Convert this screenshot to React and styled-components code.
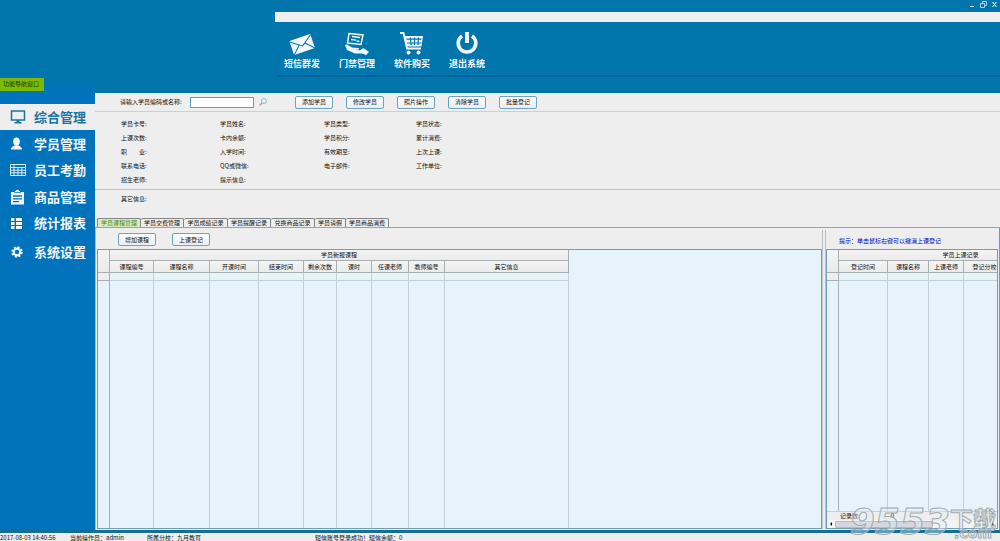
import React, { useState } from "react";
import styled, { createGlobalStyle } from "styled-components";

const GlobalStyle = createGlobalStyle`
    * {
        box-sizing: border-box;
    }

    html, body, #root {
        height: 100%;
        margin: 0;
    }

    body, button, input {
        font-family: "Noto Sans CJK SC", "Noto Sans", sans-serif;
        font-size: 6px;
        line-height: 8px;
        color: #111;
    }

    button {
        margin: 0;
        padding: 0;
        border: 0;
        background: none;
        white-space: nowrap;
        cursor: pointer;
    }
`;

const Page = styled.div`
    position: relative;
    display: flex;
    flex-direction: column;
    height: 100vh;
    overflow: hidden;
    background: #eeeeee;
`;

const Header = styled.header`
    flex: none;
    height: 78px;
    background: #0076ad;
`;

const WindowButtons = styled.div`
    display: flex;
    justify-content: flex-end;
    gap: 4px;
    height: 12px;
    padding: 1px 2px 0 0;

    button {
        width: 7px;
        height: 7px;
    }

    svg {
        display: block;
    }
`;

const MenuStrip = styled.div`
    height: 10px;
    margin-left: 275px;
    background: #eeefee;
`;

const MainMenu = styled.nav`
    display: flex;
    height: 55px;
    margin-left: 277px;
    padding-top: 9px;
    border-bottom: 2px solid #00649c;
`;

const MainMenuItem = styled.button`
    display: flex;
    flex-direction: column;
    align-items: center;
    width: 55px;
    padding-right: 5px;
    font-size: 9px;
    line-height: 12px;
    font-weight: 700;
    color: #f4f8fb;

    svg {
        display: block;
        margin-bottom: 3px;
    }
`;

const Body = styled.div`
    display: flex;
    flex: 1;
    min-height: 0;
    background: #0073bc;
`;

const Sidebar = styled.aside`
    flex: none;
    width: 95px;
    background: linear-gradient(#0076ad, #0073bc 16px);
`;

const NavTitle = styled.div`
    width: 44px;
    height: 13px;
    padding: 2px 0 0 3px;
    background: #7fba00;
    color: #15381a;
    white-space: nowrap;
`;

const NavList = styled.nav`
    padding-top: 13px;
`;

const NavItem = styled.button`
    display: flex;
    align-items: center;
    gap: 8px;
    width: 100%;
    height: 26px;
    margin-bottom: ${(props) => props.$after || "0"};
    padding-left: 9px;
    font-size: 13px;
    line-height: 20px;
    font-weight: 700;
    color: ${(props) => (props.$active ? "#1b75a3" : "#f0f6fa")};
    background: ${(props) => (props.$active ? "#eeeeee" : "transparent")};

    svg {
        flex: none;
    }
`;

const Content = styled.main`
    display: flex;
    flex: 1;
    flex-direction: column;
    min-width: 0;
    padding-top: 15px;
    background: linear-gradient(#0076ad 15px, #eeeeee 15px);
`;

const SearchBar = styled.form`
    display: flex;
    flex: none;
    align-items: center;
    height: 19px;
    padding-left: 25px;
    border-bottom: 1px solid #cfcfcf;
    white-space: nowrap;

    label {
        width: 70px;
    }

    input {
        width: 64px;
        height: 11px;
        padding: 0 2px;
        border: 1px solid #5f9fc0;
        background: #fff;
    }
`;

const SearchButton = styled.button`
    width: 10px;
    height: 10px;
    margin: 0 27px 0 4px;

    svg {
        display: block;
    }
`;

const ButtonGroup = styled.div`
    display: flex;
    gap: ${(props) => props.$gap};
`;

const SmallButton = styled.button`
    width: 38px;
    height: 13px;
    border: 1px solid #6ca5c4;
    border-radius: 2px;
    background: linear-gradient(#ffffff, #e9eef2);
`;

const StudentInfo = styled.dl`
    display: grid;
    flex: none;
    grid-template-columns: 99px 104px 92px 1fr;
    grid-auto-rows: 14px;
    margin: 0;
    padding: 5px 0 2px 26px;
    line-height: 14px;
    border-bottom: 1px solid #bfc3c3;

    dt {
        white-space: pre;
    }
`;

const OtherInfo = styled.div`
    flex: none;
    height: 28px;
    padding: 5px 26px;
`;

const Tabs = styled.div`
    display: grid;
    flex: none;
    grid-template-columns: 44px 43px 44px 43px 44px 31px 43px;
    height: 10px;
    padding-left: 2px;
    border-bottom: 1px solid #79afc6;
`;

const Tab = styled.button`
    border: 1px solid #858585;
    border-bottom: 0;
    border-left-width: ${(props) => (props.$active ? "1px" : "0")};
    border-radius: 2px 2px 0 0;
    color: ${(props) => (props.$active ? "#4f8a1c" : "#111")};
    background: ${(props) => (props.$active ? "#dcebbd" : "#eeeeee")};
`;

const Panes = styled.div`
    display: flex;
    flex: 1;
    min-height: 0;
    padding: 0 1px 1px;
    border-left: 1px solid #8cc3dd;
    border-right: 1px solid #5aa4bf;
`;

const Pane = styled.section`
    display: flex;
    flex-direction: column;
    flex: ${(props) => props.$flex};
    min-width: 0;
`;

const PaneBar = styled.div`
    display: flex;
    flex: none;
    align-items: center;
    height: 21px;
    padding-left: ${(props) => props.$indent};
    padding-top: 2px;
`;

const Splitter = styled.div`
    flex: none;
    width: 4px;
    margin-top: 2px;
    border-left: 1px solid #b9c3c8;
    border-right: 1px solid #b9c3c8;
`;

const Hint = styled.p`
    margin: 0;
    padding-top: 3px;
    color: #0000c4;
    white-space: nowrap;
`;

const GridFrame = styled.div`
    display: flex;
    flex: 1;
    flex-direction: column;
    min-height: 0;
    overflow: hidden;
    border: 1px solid #6d9fba;
    background: #e6f3fa;
`;

const GridScroll = styled.div`
    flex: 1;
    min-height: 0;
    overflow: hidden;
`;

const DataTable = styled.table`
    width: ${(props) => props.$width};
    height: 100%;
    table-layout: fixed;
    border-collapse: separate;
    border-spacing: 0;

    th, td {
        padding: 0;
        overflow: hidden;
        border-right: 1px solid #a9aeb1;
        border-bottom: 1px solid #a9aeb1;
        white-space: nowrap;
    }

    th {
        height: 12px;
        font-weight: 400;
        background: linear-gradient(#f4f4f4, #ebebeb);
    }

    thead tr:first-child th {
        height: 11px;
    }

    td {
        height: 8px;
        border-color: #c3d0d6;
    }

    td:first-child {
        background: #eeeeee;
        border-color: #a9aeb1;
    }

    tbody tr:last-child td {
        height: auto;
        border-bottom: 0;
        background: #e6f3fa;
    }
`;

const GridFooter = styled.div`
    display: flex;
    flex: none;
    gap: 31px;
    height: 9px;
    padding-left: 13px;
    border-top: 1px solid #c9cfd2;
    background: #eeeeee;
`;

const ScrollBar = styled.div`
    display: flex;
    flex: none;
    align-items: center;
    justify-content: space-between;
    height: 8px;
    background: #f3f3f3;

    button {
        width: 8px;
        height: 8px;
    }

    svg {
        display: block;
        margin: 0 auto;
    }
`;

const ScrollThumb = styled.div`
    width: 98px;
    height: 7px;
    margin-right: auto;
    border: 1px solid #b9b9c2;
    border-radius: 1px;
    background: #d6d6de;
`;

const StatusBar = styled.footer`
    display: grid;
    flex: none;
    grid-template-columns: 70px 77px 168px 1fr;
    height: 11px;
    padding-top: 1px;
    border-top: 3px solid #146e96;
    background: #eeeeee;
    white-space: nowrap;
`;

const Watermark = styled.div`
    position: absolute;
    right: 4px;
    bottom: 0;
    display: flex;
    align-items: flex-end;
    color: rgba(220, 240, 248, 0.4);
    -webkit-text-stroke: 1px #a3abaf;
    pointer-events: none;
`;

const WatermarkDigits = styled.span`
    font: italic bold 36px/38px "DejaVu Sans", sans-serif;
`;

const WatermarkSite = styled.span`
    display: flex;
    flex-direction: column;
    align-items: center;
    padding-bottom: 3px;
    font: bold 23px/22px "Noto Sans CJK SC", sans-serif;

    small {
        font: bold 14px/9px "DejaVu Sans", sans-serif;
    }
`;

const EnvelopeIcon = () => (
    <svg width="26" height="24" viewBox="0 0 26 24">
        <g transform="rotate(-19 13 13)">
            <rect x="2" y="6" width="22" height="15" rx="1" fill="#f4f7f9" />
            <path d="M2 7l11 8 11-8M2 21l8-8M24 21l-8-8" fill="none" stroke="#0076ad" strokeWidth="1" />
        </g>
    </svg>
);

const AccessIcon = () => (
    <svg width="26" height="24" viewBox="0 0 26 24">
        <path d="M5 2.500l14 1.500-2 9.500L3.500 12z" fill="none" stroke="#f4f7f9" strokeWidth="1.500" />
        <path d="M8 5.500l8 1M7 8.500l5 .6M12.500 10l3 .4" stroke="#f4f7f9" strokeWidth="1.300" />
        <path d="M1 14l2-.5 5 3 6 .5c1.500.2 1.500 1.500 0 1.800l-4 .2 6 .2 3-2 2 .8 4 3-3 3-4-1.500H11l-8-3.500z" fill="#f4f7f9" />
    </svg>
);

const CartIcon = () => (
    <svg width="26" height="24" viewBox="0 0 26 24">
        <path d="M1 2h3.500L8 17.500h14" fill="none" stroke="#f4f7f9" strokeWidth="1.800" />
        <path d="M5 5h19l-1.500 10.500H7.500z" fill="#f4f7f9" />
        <path d="M7.500 8.200h15M8 12h14.500M11.500 6.500l.5 7.500M15.500 6.500v7.500M19.500 6.500l-.5 7.500" stroke="#0076ad" strokeWidth="1.200" />
        <circle cx="9.500" cy="21.500" r="2" fill="#f4f7f9" />
        <circle cx="19.500" cy="21.500" r="2" fill="#f4f7f9" />
    </svg>
);

const PowerIcon = () => (
    <svg width="26" height="24" viewBox="0 0 26 24">
        <path d="M8 5a8.800 8.800 0 1 0 10 0" fill="none" stroke="#f4f7f9" strokeWidth="3.600" />
        <path d="M13 1v11" stroke="#f4f7f9" strokeWidth="4" />
    </svg>
);

const MonitorIcon = () => (
    <svg width="17" height="16" viewBox="0 0 17 16">
        <rect x="2.500" y="2" width="13" height="9" fill="none" stroke="#1b75a3" strokeWidth="1.500" />
        <path d="M7.500 11h3v2h2v1.500h-7V13h2z" fill="#1b75a3" />
    </svg>
);

const UserIcon = () => (
    <svg width="17" height="16" viewBox="0 0 17 16">
        <ellipse cx="7.500" cy="5.500" rx="3.300" ry="4" fill="#f4f8fb" />
        <path d="M2 13.500c0-3 2.500-3.300 4-4.300h3c1.500 1 4 1.300 4 4.300z" fill="#f4f8fb" />
    </svg>
);

const AttendanceIcon = () => (
    <svg width="17" height="16" viewBox="0 0 17 16">
        <path d="M1.500 2.500h15v11h-15zM1.500 5.500h15M1.500 8.200h15M1.500 10.800h15M5 2.500v11M9 5.500v8M12.800 5.500v8" fill="none" stroke="#dcebf5" strokeWidth="1" />
    </svg>
);

const ClipboardIcon = () => (
    <svg width="17" height="16" viewBox="0 0 17 16">
        <path d="M2 3h13v12.500H2z" fill="#f4f8fb" />
        <path d="M5.500 3.500h6v-2h-1.500V.5H7v1H5.500z" fill="#f4f8fb" stroke="#0073bc" strokeWidth=".8" />
        <path d="M4 7h9M4 9.800h9M4 12.600h6" stroke="#0073bc" strokeWidth="1.300" />
    </svg>
);

const ListIcon = () => (
    <svg width="17" height="16" viewBox="0 0 17 16">
        <path d="M2 3h3.500v3H2zM7 3h6v3H7zM2 7h3.500v3H2zM7 7h6v3H7zM2 11h3.500v3H2zM7 11h6v3H7z" fill="#f4f8fb" />
    </svg>
);

const GearIcon = () => (
    <svg width="17" height="16" viewBox="0 0 17 16">
        <circle cx="8" cy="8" r="4.700" fill="none" stroke="#f4f8fb" strokeWidth="2" strokeDasharray="2 1.690" />
        <circle cx="8" cy="8" r="3.300" fill="none" stroke="#f4f8fb" strokeWidth="2.200" />
    </svg>
);

const mainMenu = [
    { label: "短信群发", icon: <EnvelopeIcon /> },
    { label: "门禁管理", icon: <AccessIcon /> },
    { label: "软件购买", icon: <CartIcon /> },
    { label: "退出系统", icon: <PowerIcon /> },
];

const navItems = [
    { label: "综合管理", icon: <MonitorIcon />, after: "1px" },
    { label: "学员管理", icon: <UserIcon /> },
    { label: "员工考勤", icon: <AttendanceIcon />, after: "1px" },
    { label: "商品管理", icon: <ClipboardIcon /> },
    { label: "统计报表", icon: <ListIcon />, after: "3px" },
    { label: "系统设置", icon: <GearIcon /> },
];

const studentActions = ["添加学员", "修改学员", "照片操作", "清除学员", "批量登记"];

const studentFields = [
    "学员卡号:", "学员姓名:", "学员类型:", "学员状态:",
    "上课次数:", "卡内余额:", "学员积分:", "累计消费:",
    "职　　业:", "入学时间:", "有效期至:", "上次上课:",
    "联系电话:", "QQ或微信:", "电子邮件:", "工作单位:",
    "招生老师:", "提示信息:",
];

const tabNames = ["学员课程管理", "学员交费管理", "学员成绩记录", "学员提醒记录", "兑换商品记录", "学员请假", "学员商品消费"];

const courseColumns = [
    ["课程编号", 44], ["课程名称", 56], ["开课时间", 49], ["结束时间", 45], ["剩余次数", 33],
    ["课时", 35], ["任课老师", 37], ["教师编号", 36], ["其它信息", 124],
];

const recordColumns = [["登记时间", 49], ["课程名称", 41], ["上课老师", 35], ["登记分校", 42], ["", 77]];

function DataGrid(props) {
    const { title, columns } = props;
    const total = columns.reduce((sum, column) => sum + column[1], 12);

    return (
        <DataTable $width={`${total}px`}>
            <colgroup>
                <col width="12" />
                {columns.map(([name, width]) => <col key={name} width={width} />)}
            </colgroup>
            <thead>
                <tr>
                    <th rowSpan="2"></th>
                    <th colSpan={columns.length}>{title}</th>
                </tr>
                <tr>
                    {columns.map(([name]) => <th key={name}>{name}</th>)}
                </tr>
            </thead>
            <tbody>
                <tr>
                    <td></td>
                    {columns.map(([name]) => <td key={name}></td>)}
                </tr>
                <tr>
                    <td></td>
                    {columns.map(([name]) => <td key={name}></td>)}
                </tr>
            </tbody>
        </DataTable>
    );
}

function App() {
    const [activeNav, setActiveNav] = useState("综合管理");
    const [activeTab, setActiveTab] = useState("学员课程管理");

    return (
        <Page>
            <GlobalStyle />
            <Header>
                <WindowButtons>
                    <button aria-label="最小化">
                        <svg width="7" height="7"><path d="M1 5.500h4" stroke="#fff" /></svg>
                    </button>
                    <button aria-label="还原">
                        <svg width="7" height="7"><path d="M2.500 2.500v-2h4v4h-2M.5 2.500h4v4h-4z" fill="none" stroke="#d6e9f3" strokeWidth=".8" /></svg>
                    </button>
                    <button aria-label="关闭">
                        <svg width="7" height="7"><path d="M1.500 1l4 5M5.500 1l-4 5" stroke="#fff" /></svg>
                    </button>
                </WindowButtons>
                <MenuStrip />
                <MainMenu>
                    {mainMenu.map((item) => (
                        <MainMenuItem key={item.label}>{item.icon}{item.label}</MainMenuItem>
                    ))}
                </MainMenu>
            </Header>

            <Body>
                <Sidebar>
                    <NavTitle>功能导航窗口</NavTitle>
                    <NavList>
                        {navItems.map((item) => (
                            <NavItem
                                key={item.label}
                                $active={item.label === activeNav}
                                $after={item.after}
                                onClick={() => setActiveNav(item.label)}
                            >
                                {item.icon}{item.label}
                            </NavItem>
                        ))}
                    </NavList>
                </Sidebar>

                <Content>
                    <SearchBar onSubmit={(event) => event.preventDefault()}>
                        <label htmlFor="keyword">请输入学员编码或名称:</label>
                        <input id="keyword" type="text" />
                        <SearchButton aria-label="查询">
                            <svg width="10" height="10" viewBox="0 0 10 10">
                                <circle cx="6" cy="4" r="2.500" fill="#e2f3fc" stroke="#91bdd5" />
                                <path d="M4 6L1.500 8.500" stroke="#b09a84" strokeWidth="1.300" />
                            </svg>
                        </SearchButton>
                        <ButtonGroup $gap="13px">
                            {studentActions.map((name) => <SmallButton type="button" key={name}>{name}</SmallButton>)}
                        </ButtonGroup>
                    </SearchBar>

                    <StudentInfo>
                        {studentFields.map((name) => <dt key={name}>{name}</dt>)}
                    </StudentInfo>
                    <OtherInfo>其它信息:</OtherInfo>

                    <Tabs role="tablist">
                        {tabNames.map((name) => (
                            <Tab key={name} role="tab" $active={name === activeTab} onClick={() => setActiveTab(name)}>{name}</Tab>
                        ))}
                    </Tabs>

                    <Panes>
                        <Pane $flex="1">
                            <PaneBar $indent="21px">
                                <ButtonGroup $gap="16px">
                                    <SmallButton>增加课程</SmallButton>
                                    <SmallButton>上课登记</SmallButton>
                                </ButtonGroup>
                            </PaneBar>
                            <GridFrame>
                                <GridScroll>
                                    <DataGrid title="学员新报课程" columns={courseColumns} />
                                </GridScroll>
                            </GridFrame>
                        </Pane>
                        <Splitter />
                        <Pane $flex="0 0 172px">
                            <PaneBar $indent="13px">
                                <Hint>提示：单击鼠标右键可以撤消上课登记</Hint>
                            </PaneBar>
                            <GridFrame>
                                <GridScroll>
                                    <DataGrid title="学员上课记录" columns={recordColumns} />
                                </GridScroll>
                                <GridFooter><span>记录数:</span><span>0</span></GridFooter>
                                <ScrollBar>
                                    <button aria-label="向左"><svg width="4" height="8"><path d="M3 2L1 4l2 2z" /></svg></button>
                                    <ScrollThumb />
                                    <button aria-label="向右"><svg width="4" height="8"><path d="M1 2l2 2-2 2z" /></svg></button>
                                </ScrollBar>
                            </GridFrame>
                        </Pane>
                    </Panes>
                </Content>
            </Body>

            <StatusBar>
                <span>2017-08-03 14:40:56</span>
                <span>当前操作员：admin</span>
                <span>所属分校：九月教育</span>
                <span>短信账号登录成功！短信余额：0</span>
            </StatusBar>

            <Watermark>
                <WatermarkDigits>9553</WatermarkDigits>
                <WatermarkSite>下载<small>.com</small></WatermarkSite>
            </Watermark>
        </Page>
    );
}

export default App;
